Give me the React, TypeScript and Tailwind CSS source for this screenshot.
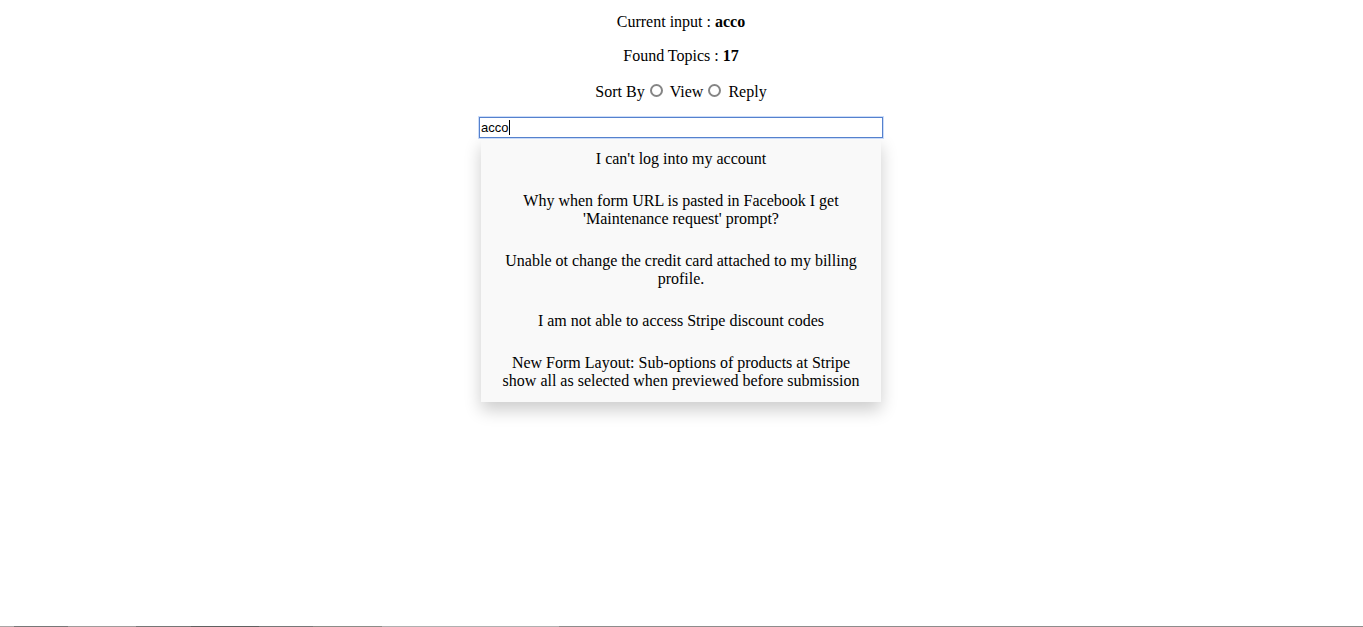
import { useState } from "react";

const topics = [
  "I can't log into my account",
  "Why when form URL is pasted in Facebook I get 'Maintenance request' prompt?",
  "Unable ot change the credit card attached to my billing profile.",
  "I am not able to access Stripe discount codes",
  "New Form Layout: Sub-options of products at Stripe show all as selected when previewed before submission",
];

function SortOption({
  label,
  checked,
  onSelect,
}: {
  label: string;
  checked: boolean;
  onSelect: () => void;
}) {
  return (
    <label className="flex items-center gap-[7px]">
      <input
        type="radio"
        name="sort"
        checked={checked}
        onChange={onSelect}
        className="mb-[3px] size-[13px] appearance-none rounded-full border-2 border-[#858585] bg-white checked:border-4 checked:border-[#5581cd]"
      />
      {label}
    </label>
  );
}

export default function App() {
  const [query, setQuery] = useState("acco");
  const [sort, setSort] = useState("");

  return (
    <div className="flex min-h-screen flex-col bg-white font-['Liberation_Serif',serif] text-[16px] leading-[18px] text-black">
      <main className="flex grow flex-col items-center pt-[13px] pr-px text-center">
        <p>
          Current input : <b>{query}</b>
        </p>
        <p className="mt-4">
          Found Topics : <b>17</b>
        </p>
        <div className="mt-[18px] flex items-center gap-[5px]">
          <span>Sort By</span>
          <SortOption label="View" checked={sort === "view"} onSelect={() => setSort("view")} />
          <SortOption label="Reply" checked={sort === "reply"} onSelect={() => setSort("reply")} />
        </div>
        <div className="relative z-10 mt-4 w-full max-w-[404px]">
          <input
            type="text"
            aria-label="Search topics"
            value={query}
            onChange={(e) => setQuery(e.target.value)}
            className="block h-[21px] w-full border border-[#5581cd] bg-white px-px font-['Liberation_Sans',sans-serif] text-[13px] caret-transparent ring-1 ring-[#a9c4f5]/60 outline-none"
          />
          <span aria-hidden="true" className="absolute top-[3px] left-[30px] h-[15px] w-px bg-black" />
        </div>
        <ul className="w-full max-w-[400px] bg-[#f9f9f9] shadow-[0_8px_16px_rgba(0,0,0,0.2)]">
          {topics.map((topic) => (
            <li key={topic}>
              <a href="#" className="block px-4 py-3">
                {topic}
              </a>
            </li>
          ))}
        </ul>
      </main>
      <footer className="flex h-px bg-[#8e8c8c]">
        <span className="w-[1%] bg-[#aaa5a5]" />
        <span className="w-[4%] bg-[#777777]" />
        <span className="w-[5%] bg-[#a09b9b]" />
        <span className="w-[4%] bg-[#767676]" />
        <span className="w-[5%] bg-[#606060]" />
        <span className="w-[4%] bg-[#777777]" />
        <span className="w-[5%] bg-[#8c8c88]" />
        <span className="w-[13%] bg-[#b0b0b0]" />
      </footer>
    </div>
  );
}
